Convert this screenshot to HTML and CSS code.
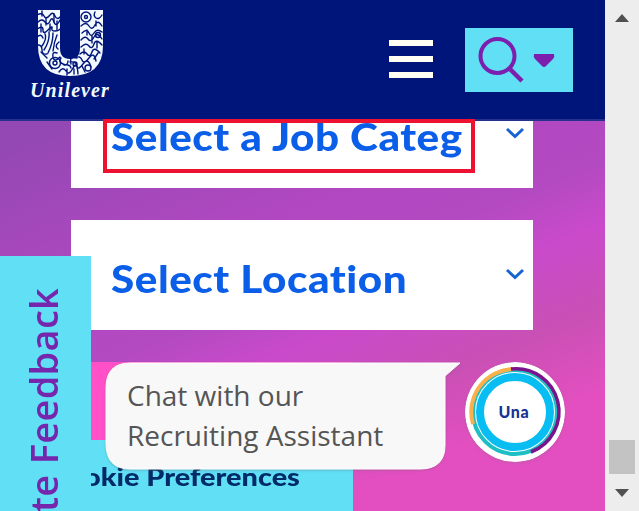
FILE: index.html
```html
<!DOCTYPE html>
<html lang="en">
<head>
<meta charset="utf-8">
<title>Unilever Careers</title>
<link rel="stylesheet" href="styles.css">
</head>
<body>
<div class="page">
  <header class="header">
    <div class="brand">
      <svg class="brand-mark" viewBox="0 0 66 68" width="66" height="68" fill="none" stroke-linecap="round">
        <path fill="#f2faff" d="M1 1H23V39Q23 50 33 50Q43 50 43 39V1H66V37Q66 67 33 67Q1 67 1 37Z"/>
        <g stroke="#001579" stroke-width="1.4">
          <path d="M0 6q5-3 7 1t6-1q3-4 5 1t6 0M1 13q4-4 7 0t5-1 4 1 6-2M0 20q6-4 6 1t5 0 4-2 3 3 5-2M0 28q4-4 6 1M8 25q2 5-3 12M12 23q1 9-5 18M16 24q0 10-5 20M20 26q-3 7-4 16M1 36q4 0 4 5t5 4M22 33q-5 4-1 7M20 44q-5-2-4 4t7 0M24 49q-3 4 2 6t5-3"/>
          <path d="M44 17q5-5 8 0t6-1 7 1M58 3q-2 4 1 6t6-3M45 24q5-5 7 0t5 0 8-1M44 31q4-5 7-1t6-2 8 2M44 38q5-5 8-1t5-2 8 1M43 45q4-4 7 0t5-2 8 1M38 49q5-3 7 2t7-2 7 3M33 53q6-1 7 4t6-2 8 3M22 63q4-6 7-1t7-3 5 6M59 12v5M50 21v5M55 27v7M60 33v6M9 9v7M17 5v8M4 15v8M13 15v7M40 49q-8-3-6 6M27 56q6-1 7 3M5 2v5M20 12v9M4 43l6 6M10 53l5 7M30 60v6M37 60v5M45 57l3 6M57 50l4-6M47 40v5"/>
          <circle cx="49" cy="8" r="5"/><circle cx="49" cy="8" r="1.5"/>
          <circle cx="18" cy="54" r="5.5"/><circle cx="18" cy="54" r="2"/>
          <circle cx="51" cy="59" r="3"/><circle cx="61" cy="26" r="2.5"/><circle cx="38" cy="55" r="2"/>
        </g>
      </svg>
      <span class="brand-name">Unilever</span>
    </div>
    <div class="menu"><i></i><i></i><i></i></div>
    <div class="search">
      <svg width="108" height="64" viewBox="0 0 108 64" fill="none">
        <circle cx="32.500" cy="28" r="17" stroke="#7d1fae" stroke-width="4"/>
        <path d="M44 40L57 53" stroke="#7d1fae" stroke-width="4.500"/>
        <path d="M69 26H89Q90 29 88 31L81 38Q79 40 77 38L70 31Q68 29 69 26Z" fill="#7d1fae"/>
      </svg>
    </div>
  </header>
  <main class="form">
    <div class="field field-category">
      <div class="focus-box"><span class="value">Select a Job Categ</span></div>
      <svg class="chevron" width="20" height="14" viewBox="0 0 20 14"><path d="M2 3L10 10.500L18 3" fill="none" stroke="#1564cf" stroke-width="3"/></svg>
    </div>
    <div class="field field-location">
      <span class="value value-location">Select Location</span>
      <svg class="chevron" width="20" height="14" viewBox="0 0 20 14"><path d="M2 3L10 10.500L18 3" fill="none" stroke="#1564cf" stroke-width="3"/></svg>
    </div>
  </main>
  <div class="pink-panel"></div>
  <div class="cookies"><span>okie Preferences</span></div>
  <div class="feedback"><span>te Feedback</span></div>
  <div class="chat">
    <svg class="bubble" width="358" height="112" viewBox="0 0 358 112">
      <path d="M25 2H355L340 15V84Q340 108 315 108H25Q1 108 1 82V27Q1 2 25 2Z" fill="#f8f8f8" stroke="#fff"/>
    </svg>
    <p>Chat with our<br>Recruiting Assistant</p>
  </div>
  <div class="una">
    <svg width="100" height="100" viewBox="0 0 100 100" fill="none">
      <circle cx="50" cy="50" r="50" fill="#fff"/>
      <circle cx="50" cy="50" r="42" stroke="#1ebfc4" stroke-width="4"/>
      <path d="M8 62A43 43 0 0 1 48 7" stroke="#fbb04b" stroke-width="4"/>
      <path d="M46 7A43 43 0 0 1 66 90" stroke="#7b138c" stroke-width="3.500"/>
      <circle cx="50" cy="50" r="35" stroke="#08bdf2" stroke-width="8"/>
    </svg>
    <span>Una</span>
  </div>
</div>
<aside class="scrollbar">
  <svg width="14" height="8" viewBox="0 0 14 8"><path d="M0 8L7 0L14 8Z" fill="#505050"/></svg>
  <div class="thumb"></div>
  <svg width="14" height="8" viewBox="0 0 14 8"><path d="M0 0H14L7 8Z" fill="#505050"/></svg>
</aside>
</body>
</html>
```
FILE: styles.css
```css
* { box-sizing: border-box; }
body { margin: 0; width: 639px; height: 511px; overflow: hidden; display: flex; font-family: Lato, sans-serif; }
.page { position: relative; width: 605px; height: 511px; overflow: hidden; background: linear-gradient(158deg, #9448b4 20%, #b148c1 43%, #b44ac2 54%, #ca4acb 62%, #c950b5 73%, #e34fc0 84%); }
.header { height: 121px; background: #001579; border-bottom: 2px solid #24308c; display: flex; align-items: flex-start; }
.brand { width: 90px; margin-left: 25px; padding-top: 9px; display: flex; flex-direction: column; align-items: center; }
.brand-mark { display: block; }
.brand-name { font: italic bold 20px/26px "Liberation Serif", serif; letter-spacing: 1.1px; color: #f2faff; }
.menu { width: 44px; margin: 40px 32px 0 274px; display: grid; gap: 10px; }
.menu i { height: 6px; background: #fffff4; }
.search { width: 108px; height: 64px; margin-top: 28px; background: #61dff5; }
.search svg { display: block; }
.form { width: 462px; margin-left: 71px; display: grid; gap: 32px; }
.field { background: #fff; display: flex; justify-content: space-between; padding-right: 8px; }
.field-category { height: 67px; }
.field-location { height: 110px; }
.focus-box { width: 372px; height: 54px; margin: -2px 0 0 32px; padding-left: 4px; border: 4px solid #ed1231; line-height: 27px; }
.value { display: inline-block; color: #0b5ee8; font-size: 38px; font-weight: 900; font-variant-ligatures: none; letter-spacing: .5px; white-space: nowrap; transform: scaleX(1.11); transform-origin: left; }
.value-location { margin-left: 40px; line-height: 116px; }
.field-category .chevron { margin-top: 5px; }
.field-location .chevron { margin-top: 47px; }
.pink-panel { position: absolute; left: 91px; top: 362px; width: 262px; height: 78px; background: #ff50c7; }
.cookies { position: absolute; left: 91px; top: 440px; width: 262px; height: 71px; overflow: hidden; background: #61dff5; color: #002b68; font: 900 25px/72px Lato, sans-serif; white-space: nowrap; }
.cookies span { display: inline-block; margin-left: -7px; transform: scaleX(1.155); transform-origin: left; }
.feedback { position: absolute; left: 0; top: 256px; width: 91px; height: 255px; overflow: hidden; background: #61dff5; display: flex; justify-content: center; }
.feedback span { writing-mode: vertical-rl; transform: rotate(180deg); height: 225px; margin: 31px 4px 0 0; color: #7526ad; font: 600 38px/91px "Open Sans", sans-serif; letter-spacing: .3px; white-space: nowrap; }
.chat { position: absolute; left: 105px; top: 361px; width: 358px; height: 112px; }
.bubble { position: absolute; filter: drop-shadow(0 1px 1px #6665); }
.chat p { position: relative; margin: 0; padding: 14px 0 0 22px; color: #555; font: 28px/40px "Open Sans", sans-serif; }
.una { position: absolute; left: 465px; top: 362px; width: 100px; height: 100px; display: grid; place-items: center; }
.una > * { grid-area: 1 / 1; }
.una svg { border-radius: 50%; box-shadow: 0 1px 3px #7775; }
.una span { position: relative; margin-right: 2px; color: #173393; font: 900 16px/20px Lato, sans-serif; letter-spacing: .7px; }
.scrollbar { width: 34px; height: 511px; background: #ededed; display: flex; flex-direction: column; align-items: center; padding: 14px 0; }
.thumb { width: 26px; height: 34px; margin: auto 0 15px; background: #c3c3c3; }
```
